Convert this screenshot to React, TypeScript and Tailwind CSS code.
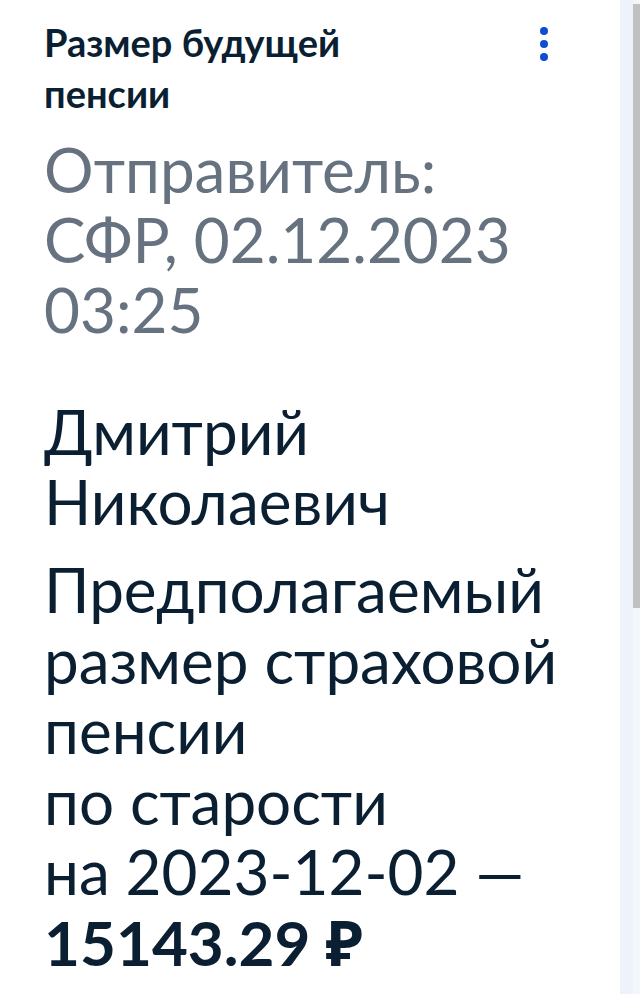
import React from 'react'

function Dots() {
  return (
    <div className="flex flex-col items-center gap-[5px] pt-[10px]">
      <span className="block h-[8px] w-[8px] rounded-full bg-[#0d4cd3]" />
      <span className="block h-[8px] w-[8px] rounded-full bg-[#0d4cd3]" />
      <span className="block h-[8px] w-[8px] rounded-full bg-[#0d4cd3]" />
    </div>
  )
}

export default function App() {
  return (
    <div className="flex h-[994px] w-[640px] overflow-hidden bg-white" style={{ fontFamily: 'Lato, "Noto Sans", sans-serif' }}>
      <main className="flex w-[620px] flex-col pl-[44px] pt-[17px]">
        <header className="flex justify-between pr-[72px]">
          <h1 className="w-[400px] text-[38px] font-bold leading-[51px] text-[#0b1f33]">Размер будущей пенсии</h1>
          <Dots />
        </header>

        <p className="mt-[15px] text-[62px] leading-[70px] text-[#66727f]">
          Отправитель:
          <br />
          СФР, 02.12.2023
          <br />
          03:25
        </p>

        <p className="mt-[52px] text-[62px] leading-[70px] text-[#0b1f33]">
          Дмитрий
          <br />
          Николаевич
        </p>

        <p className="mt-[18px] text-[62px] leading-[70.5px] text-[#0b1f33]">
          Предполагаемый
          <br />
          размер страховой
          <br />
          пенсии
          <br />
          по старости
          <br />
          на 2023-12-02 —
          <br />
          <span className="font-bold">15143.29 ₽</span>
        </p>
      </main>

      <div className="w-[13px] bg-[#eef3fb]" />
      <div className="flex w-[7px] flex-col bg-[#f3f6fb] pt-[4px]">
        <div className="h-[604px] w-full bg-[#c1c1c1]" />
      </div>
    </div>
  )
}
